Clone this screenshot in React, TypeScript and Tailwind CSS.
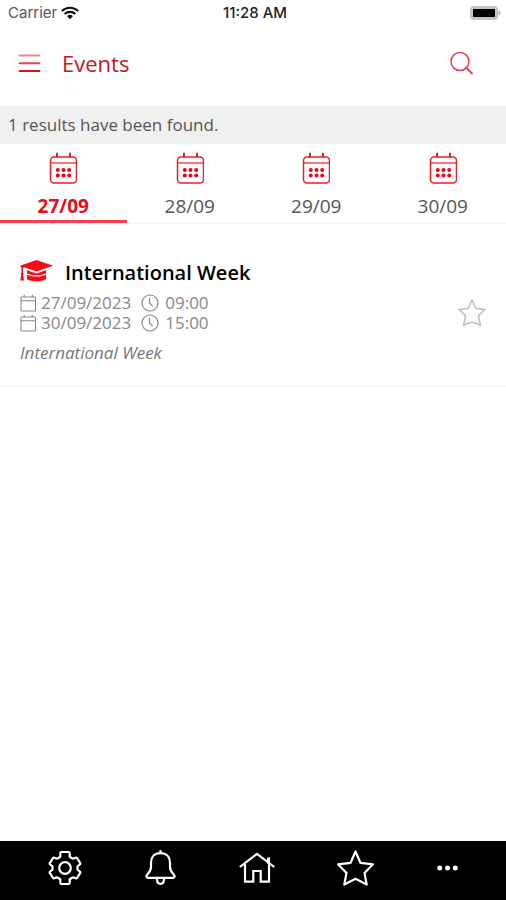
import { useState } from "react";

const days = ["27/09", "28/09", "29/09", "30/09"];

const times = [
  { date: "27/09/2023", hour: "09:00" },
  { date: "30/09/2023", hour: "15:00" },
];

function StatusBar() {
  return (
    <div className="grid grid-cols-3 items-center h-[26px] pl-2 pr-1 font-['Inter',sans-serif] text-[15px] leading-4 text-[#222]">
      <div className="flex items-center gap-1">
        <span className="text-[#555]">Carrier</span>
        <svg width="18" height="14" viewBox="0 0 18 14" fill="none" stroke="#111" strokeWidth="2.1" aria-hidden="true">
          <path d="M.9 5A11.6 11.6 0 0 1 17.1 5" />
          <path d="M3.6 8A7.8 7.8 0 0 1 14.4 8" />
          <path d="M6.1 10.2A4.2 4.2 0 0 1 11.9 10.2L9 13.2Z" fill="#111" stroke="none" />
        </svg>
      </div>
      <span className="text-center font-medium">11:28 AM</span>
      <svg className="justify-self-end" width="32" height="16" viewBox="0 0 32 16" aria-hidden="true">
        <rect x="0" y="1" width="28" height="14" rx="3.5" fill="#c4c4c4" />
        <path d="M28.500 5.500v5c1.300-.5 2-1.400 2-2.500s-.7-2-2-2.500z" fill="#aaa" />
        <rect x="3" y="4" width="22" height="8" rx="1" fill="#000" />
      </svg>
    </div>
  );
}

function Header() {
  return (
    <header className="flex items-center h-20 pl-[18px] pr-8 pb-1.5 text-[#c8141e]">
      <button type="button" aria-label="Menu" className="mr-[21px]">
        <svg width="23" height="20" viewBox="0 0 23 20" fill="none" strokeWidth="1.9" strokeLinecap="round" aria-hidden="true">
          <path d="M1.500 2.500h20" stroke="#ee858b" />
          <path d="M1.500 10.300h20" stroke="#de4a52" />
          <path d="M1.500 18h20" stroke="#d01522" />
        </svg>
      </button>
      <h1 className="flex-1 text-[22px] leading-8">Events</h1>
      <button type="button" aria-label="Search">
        <svg width="25" height="25" viewBox="0 0 25 25" fill="none" stroke="#e04450" aria-hidden="true">
          <circle cx="11" cy="10.500" r="9" strokeWidth="1.500" />
          <path d="M17 16.500l6 6" strokeWidth="1.900" strokeLinecap="round" />
        </svg>
      </button>
    </header>
  );
}

function DayIcon() {
  return (
    <svg width="28" height="32" viewBox="0 0 28 32" fill="none" stroke="#ee1c25" aria-hidden="true">
      <rect x="1.500" y="5" width="26" height="26" rx="3.500" strokeWidth="1.500" />
      <path d="M1.500 11h26" strokeWidth="1.200" />
      <path d="M8 .8v4.400M21 .8v4.400" strokeWidth="2" />
      <g fill="#f00014" stroke="none">
        <circle cx="8.800" cy="18" r="2" />
        <circle cx="14.500" cy="18" r="2" />
        <circle cx="20.200" cy="18" r="2" />
        <circle cx="8.800" cy="23.500" r="2" />
        <circle cx="14.500" cy="23.500" r="2" />
        <circle cx="20.200" cy="23.500" r="2" />
      </g>
    </svg>
  );
}

function EventCard() {
  const [saved, setSaved] = useState(false);

  return (
    <article className="flex items-center px-5 pt-8 pb-5 border-b-2 border-[#f5f5f5]">
      <div className="flex-1">
        <div className="flex items-start gap-3 pt-1 mb-[7px]">
          <svg width="33" height="22" viewBox="0 0 33 22" fill="#f90a14" aria-hidden="true">
            <path d="M16.500 0L33 5.800 16.500 11.500 4 7.200 3 8.500v4.200c.7.500.7 1.400.2 1.900L4 20.500H.3l.9-5.900c-.5-.6-.4-1.400.3-1.900V7.500L0 5.800z" />
            <path d="M7 13.200v-3l9.500 3.300 9.500-3.300v3c-2.500 1.500-5.500 2.100-9.500 2.100s-7-.6-9.500-2.100z" />
            <path d="M7 14.500c2.500 1.500 5.500 2.100 9.500 2.100s7-.6 9.500-2.100v4.700c-5 2.700-14 2.700-19 0z" />
          </svg>
          <h2 className="text-[20px] leading-[26px] font-semibold text-black">International Week</h2>
        </div>
        {times.map((t) => (
          <div key={t.date} className="flex items-center h-5 text-[17px] leading-5 text-[#888]">
            <svg className="mr-1" width="17" height="18" viewBox="0 0 17 18" fill="none" stroke="#888" aria-hidden="true">
              <rect x="1" y="3" width="14.500" height="14" rx="1" strokeWidth="1.100" />
              <path d="M1 6.800h14.500M4.200 .8v2.500M12.300 .8v2.500" strokeWidth="1.100" />
            </svg>
            <span>{t.date}</span>
            <svg className="ml-2.5 mr-1.5" width="18" height="18" viewBox="0 0 18 18" fill="none" stroke="#888" strokeWidth="1.200" aria-hidden="true">
              <circle cx="9" cy="9" r="8" />
              <path d="M8.500 4v5l3.200 3.200" />
            </svg>
            <span>{t.hour}</span>
          </div>
        ))}
        <p className="mt-2 text-[17px] leading-6 italic text-[#777]">International Week</p>
      </div>
      <button type="button" aria-label="Favourite" aria-pressed={saved} onClick={() => setSaved(!saved)} className="pt-1">
        <svg width="28" height="28" viewBox="0 0 28 28" fill={saved ? "#bbb" : "none"} stroke="#bdbdbd" strokeWidth="1.500" strokeLinejoin="round" aria-hidden="true">
          <path d="M14 1l3.900 8.500 9.100 1-6.600 6.300 2.100 9.700Q14 20.500 5.500 26.500l2.100-9.700L1 10.500l9.100-1z" />
        </svg>
      </button>
    </article>
  );
}

function BottomNav() {
  return (
    <nav className="flex items-center justify-between h-[59px] px-12 pb-1.5 bg-black text-white">
      <a href="#settings" aria-label="Settings">
        <svg width="34" height="36" viewBox="0 0 34 36" fill="none" stroke="currentColor" strokeWidth="2.200" strokeLinejoin="round" aria-hidden="true">
          <path d="M13.500 2h7q1.200 0 1.200 1.200v3.600l2.900 1.700q1.500.2 3-.8.900-.4 1.500.5l3 4.600q.6 1-.3 1.700l-2.300 1.900v3.200l2.300 1.900q.9.700.3 1.700l-3 4.600q-.6.900-1.500.5-1.500-1-3-.8l-2.900 1.700v3.600q0 1.200-1.200 1.200h-7q-1.200 0-1.200-1.200v-3.600l-2.900-1.700q-1.500-.2-3 .8-.9.400-1.500-.5l-3-4.600q-.6-1 .3-1.700l2.300-1.900v-3.200l-2.300-1.900q-.9-.7-.3-1.700l3-4.600q.6-.9 1.500-.5 1.500 1 3 .8l2.900-1.700V3.200q0-1.200 1.200-1.200z" />
          <circle cx="17" cy="18" r="5.800" />
        </svg>
      </a>
      <a href="#notifications" aria-label="Notifications">
        <svg width="31" height="36" viewBox="0 0 31 36" fill="none" stroke="currentColor" strokeWidth="2.200" strokeLinejoin="round" aria-hidden="true">
          <path d="M15.500 0v3.500" />
          <path d="M15.500 3.200c-6 0-9.500 4-9.500 9.500v4c0 3.500-1.500 5.500-3.500 7.500-2 2.100-1 3.600.5 3.600h25c1.500 0 2.500-1.500.5-3.600-2-2-3.500-4-3.500-7.500v-4c0-5.500-3.500-9.500-9.500-9.500z" />
          <path d="M12 29c0 3 1.500 4.800 3.500 4.800s3.500-1.800 3.500-4.800" />
        </svg>
      </a>
      <a href="#home" aria-label="Home">
        <svg width="36" height="34" viewBox="0 0 36 34" fill="none" stroke="currentColor" strokeWidth="2.200" aria-hidden="true">
          <path d="M.8 16L18 2.800 35.200 16" />
          <path d="M6 13v17.700h8.300V20h7.400v10.700H30V13" />
          <path d="M29.500 6.500v6" strokeWidth="3" />
        </svg>
      </a>
      <a href="#favourites" aria-label="Favourites">
        <svg width="37" height="36" viewBox="0 0 37 36" fill="none" stroke="currentColor" strokeWidth="2.200" strokeLinejoin="round" aria-hidden="true">
          <path d="M18.500 1.500l4.900 11.300 12.600 1.500-8.500 8.600 2.200 11.600-11.200-5.700-11.200 5.700 2.200-11.600L1 14.300l12.600-1.500z" />
        </svg>
      </a>
      <a href="#more" aria-label="More">
        <svg width="21" height="6" viewBox="0 0 21 6" fill="currentColor" aria-hidden="true">
          <circle cx="2.700" cy="3" r="2.500" />
          <circle cx="10.500" cy="3" r="2.500" />
          <circle cx="18.300" cy="3" r="2.500" />
        </svg>
      </a>
    </nav>
  );
}

export default function App() {
  const [active, setActive] = useState(days[0]);

  return (
    <div className="flex flex-col min-h-screen bg-white font-['Open_Sans',sans-serif]">
      <StatusBar />
      <Header />
      <p className="px-2 py-1.5 bg-[#f0f0f0] text-[17px] leading-[26px] text-[#555]">
        1 results have been found.
      </p>
      <div className="grid grid-cols-4 border-b-2 border-[#f5f5f5]">
        {days.map((day) => (
          <button
            key={day}
            type="button"
            onClick={() => setActive(day)}
            className={
              day === active
                ? "flex flex-col items-center gap-2 pt-2 -mb-px border-b-3 border-[#f4404a] text-[19px] leading-7 font-bold text-[#ee0a14]"
                : "flex flex-col items-center gap-2 pt-2 -mb-px border-b-3 border-transparent text-[19px] leading-7 text-[#555]"
            }
          >
            <DayIcon />
            {day}
          </button>
        ))}
      </div>
      <main className="flex-1">
        <EventCard />
      </main>
      <BottomNav />
    </div>
  );
}
